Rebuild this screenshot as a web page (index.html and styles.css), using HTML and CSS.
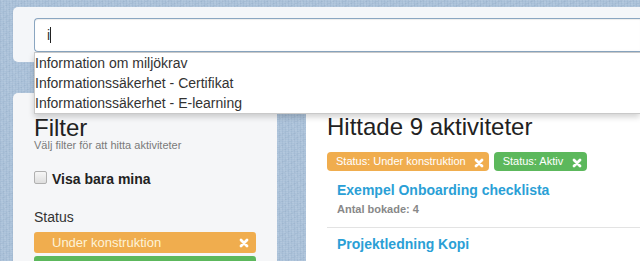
FILE: index.html
```html
<!DOCTYPE html>
<html lang="sv">
<head>
<meta charset="utf-8">
<title>Aktiviteter</title>
<link rel="stylesheet" href="styles.css">
</head>
<body>
<header class="top">
  <div class="search">
    <span class="search-text">i</span><span class="caret"></span>
  </div>
  <ul class="suggest">
    <li>Information om miljökrav</li>
    <li>Informationssäkerhet - Certifikat</li>
    <li>Informationssäkerhet - E-learning</li>
  </ul>
</header>
<div class="layout">
  <aside class="sidebar">
    <h2 class="title">Filter</h2>
    <p class="hint">Välj filter för att hitta aktiviteter</p>
    <label class="check"><span class="box"></span>Visa bara mina</label>
    <div class="label">Status</div>
    <div class="bar bar-orange"><span>Under konstruktion</span>
      <svg class="x" viewBox="0 0 10 10"><path d="M2 2 8 8M8 2 2 8"/></svg></div>
    <div class="bar bar-green"></div>
  </aside>
  <main class="main">
    <h2 class="title">Hittade 9 aktiviteter</h2>
    <div class="tags">
      <span class="tag tag-orange">Status: Under konstruktion<svg class="x" viewBox="0 0 10 10"><path d="M2 2 8 8M8 2 2 8"/></svg></span>
      <span class="tag tag-green">Status: Aktiv<svg class="x x-green" viewBox="0 0 10 10"><path d="M2 2 8 8M8 2 2 8"/></svg></span>
    </div>
    <div class="item">
      <a class="item-title">Exempel Onboarding checklista</a>
      <div class="item-meta">Antal bokade: 4</div>
    </div>
    <hr class="sep">
    <div class="item">
      <a class="item-title">Projektledning Kopi</a>
    </div>
  </main>
</div>
</body>
</html>
```

FILE: styles.css
```css
html, body {
  margin: 0;
  padding: 0;
  height: 100%;
  overflow: hidden;
}
body {
  font-family: "Liberation Sans", Arial, sans-serif;
  color: #333;
  background-color: #aac1d9;
  background-image:
    repeating-linear-gradient(0deg, rgba(255,255,255,.07) 0 1px, transparent 1px 2px),
    repeating-linear-gradient(90deg, rgba(40,70,110,.06) 0 1px, transparent 1px 3px),
    repeating-linear-gradient(63deg, rgba(255,255,255,.05) 0 2px, transparent 2px 7px),
    repeating-linear-gradient(-27deg, rgba(30,60,100,.04) 0 1px, transparent 1px 5px);
}
.top {
  position: relative;
  margin: 7px 0 0 13px;
  padding: 11px 0 10px 21px;
  background: #f4f6f9;
  border-radius: 5px 0 0 5px;
}
.search {
  height: 34px;
  box-sizing: border-box;
  border: 1px solid #8aa6c1;
  border-right: none;
  border-radius: 4px 0 0 4px;
  background: #fff;
  box-shadow: inset 0 1px 1px rgba(0,0,0,.075);
  padding-left: 12px;
  display: flex;
  align-items: center;
  font-size: 14px;
}
.search-text { color: #333; }
.caret {
  display: inline-block;
  width: 1px;
  height: 16px;
  background: #222;
}
.suggest {
  position: absolute;
  top: 45px;
  left: 21px;
  right: 0;
  margin: 0;
  padding: 0;
  list-style: none;
  background: #fff;
  border: 1px solid #c9c9c9;
  border-right: none;
  box-shadow: 0 3px 6px rgba(0,0,0,.18);
  z-index: 5;
}
.suggest li {
  font-size: 14px;
  line-height: 20px;
  color: #333;
}
.layout {
  display: flex;
  margin: 31px 0 0 13px;
  gap: 29px;
  height: 300px;
}
.sidebar {
  width: 264px;
  box-sizing: border-box;
  padding: 0 21px;
  background: #f5f6f8;
  border-radius: 5px 5px 0 0;
}
.main {
  flex: 1;
  padding-left: 21px;
  background: #fff;
  border-radius: 5px 0 0 0;
}
.title {
  margin: 23px 0 0;
  font-size: 24px;
  line-height: 23px;
  font-weight: normal;
  color: #222;
}
.main .title { margin-top: 22px; }
.hint {
  margin: 0;
  font-size: 11px;
  line-height: 12px;
  color: #7a7a7a;
}
.check {
  display: flex;
  align-items: flex-start;
  margin-top: 18px;
  font-size: 14px;
  line-height: 20px;
  font-weight: bold;
  color: #222;
}
.box {
  width: 11px;
  height: 11px;
  margin: 2px 5px 0 0;
  border: 1px solid #b0b0b0;
  border-radius: 2px;
  background: linear-gradient(#f6f6f6, #dedede);
}
.label {
  margin-top: 18px;
  font-size: 14px;
  line-height: 20px;
  color: #333;
}
.bar {
  display: flex;
  justify-content: space-between;
  align-items: center;
  height: 21px;
  padding: 0 7px 0 18px;
  border-radius: 3px;
  font-size: 13px;
  line-height: 21px;
  color: #fdf3d8;
  margin-top: 5px;
}
.bar + .bar { margin-top: 3px; }
.bar-orange { background: #f0ad4e; }
.bar-green { background: #5cb85c; }
.x {
  width: 10px;
  height: 10px;
  fill: none;
  stroke: #fff;
  stroke-width: 2.8;
  stroke-linecap: round;
}
.tags {
  display: flex;
  gap: 5px;
  margin-top: 14px;
}
.tag {
  display: inline-flex;
  align-items: center;
  height: 19px;
  padding: 0 5px 0 9px;
  border-radius: 4px;
  font-size: 11px;
  line-height: 19px;
  color: #fff;
}
.tag .x { margin-left: 8px; margin-top: 2px; }
.tag .x-green { margin-left: 9px; }
.tag-orange { background: #f0ad4e; }
.tag-green { background: #5cb85c; }
.item { padding-left: 10px; }
.item-title {
  display: block;
  margin-top: 9px;
  font-size: 14px;
  line-height: 20px;
  font-weight: bold;
  color: #2a9fd6;
}
.item-meta {
  margin-top: 1px;
  font-size: 11px;
  line-height: 16px;
  font-weight: bold;
  color: #888;
}
.sep {
  margin: 10px 0 0;
  border: 0;
  border-top: 1px solid #e3e3e3;
}
.sep + .item .item-title { margin-top: 6px; }
```
